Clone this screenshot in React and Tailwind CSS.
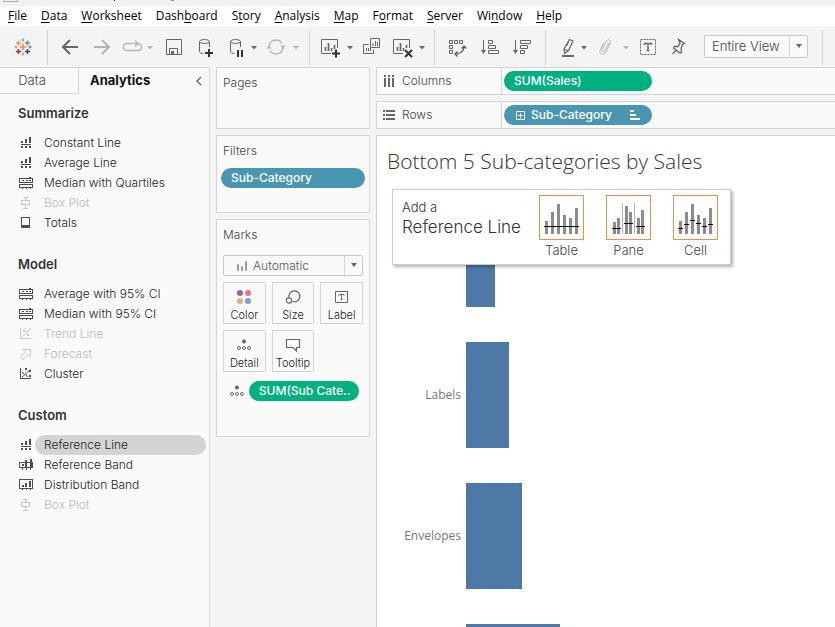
const menuItems = [
  ["", "F", "ile"],
  ["", "D", "ata"],
  ["", "W", "orksheet"],
  ["Dash", "b", "oard"],
  ["S", "t", "ory"],
  ["", "A", "nalysis"],
  ["", "M", "ap"],
  ["F", "o", "rmat"],
  ["", "S", "erver"],
  ["Wi", "n", "dow"],
  ["", "H", "elp"],
];

const sections = [
  {
    title: "Summarize",
    items: [
      { label: "Constant Line", icon: "line" },
      { label: "Average Line", icon: "line" },
      { label: "Median with Quartiles", icon: "quartiles" },
      { label: "Box Plot", icon: "box", disabled: true },
      { label: "Totals", icon: "totals" },
    ],
  },
  {
    title: "Model",
    items: [
      { label: "Average with 95% CI", icon: "quartiles" },
      { label: "Median with 95% CI", icon: "quartiles" },
      { label: "Trend Line", icon: "trend", disabled: true },
      { label: "Forecast", icon: "forecast", disabled: true },
      { label: "Cluster", icon: "cluster" },
    ],
  },
  {
    title: "Custom",
    items: [
      { label: "Reference Line", icon: "line", active: true },
      { label: "Reference Band", icon: "band" },
      { label: "Distribution Band", icon: "distribution" },
      { label: "Box Plot", icon: "box", disabled: true },
    ],
  },
];

const bars = [
  { label: "", width: 29 },
  { label: "Labels", width: 43 },
  { label: "Envelopes", width: 56 },
  { label: "", width: 94 },
];

/* Toolbar drawings, all on a 24x24 grid */
const toolIcons = {
  back: <path d="M5 12h15M12 5l-7 7 7 7" strokeWidth="2" />,
  forward: <path d="M4 12h15M12 5l7 7-7 7" strokeWidth="2" />,
  redo: <path d="M10 8.5H5a3.5 3.5 0 0 0 0 7h11a3.5 3.5 0 0 0 0-7h-5M13 5.5l3 3-3 3" strokeWidth="1.4" />,
  save: (
    <>
      <path d="M4.5 4.5h15v15h-15zM7.5 19.5v-6h8v6" />
      <path d="M9 16h3v3H9z" fill="currentColor" stroke="none" />
    </>
  ),
  dbAdd: (
    <>
      <ellipse cx="12.5" cy="6.5" rx="5" ry="2" />
      <path d="M7.5 6.5v10c0 1.2 1.8 2 4 2M17.5 6.5V12" />
      <path d="M13 18h8M17 14v8" stroke="#333" strokeWidth="2" />
    </>
  ),
  dbPause: (
    <>
      <ellipse cx="13.5" cy="6.5" rx="5" ry="2" />
      <path d="M8.5 6.5v10c0 1.2 1.8 2 4 2M18.5 6.5V12" />
      <path d="M16 15v7M20 15v7" stroke="#333" strokeWidth="2" />
    </>
  ),
  refresh: (
    <>
      <path d="M5 12a7 7 0 0 1 13-3.5M19 12a7 7 0 0 1-13 3.5" strokeWidth="1.4" />
      <path d="M2.5 13.5h5L5 10.5zM16.5 10.5h5L19 13.5z" fill="currentColor" stroke="none" />
    </>
  ),
  sheetAdd: (
    <>
      <path d="M19.5 13V4.5h-16v14H13" />
      <path d="M7.5 16v-4M10.5 16v-8M13.5 16v-3M16.5 14v-4" strokeWidth="1.6" />
      <path d="M14 18.5h8M18 14.5v8" stroke="#333" strokeWidth="2" />
    </>
  ),
  duplicate: (
    <>
      <path d="M10.5 3.5h9v9h-9zM8.5 9.5h-5v9h10v-4" />
      <path d="M13 11V8M15.5 11V6M17.5 11V7M6.5 16v-3M8.5 16v-3M10.5 16v-3" />
    </>
  ),
  sheetClear: (
    <>
      <path d="M19.5 13V4.5h-16v14H13" />
      <path d="M7.5 16v-4M10.5 16v-8M13.5 16v-3M16.5 13v-3" strokeWidth="1.6" />
      <path d="M15 15l7 7M22 15l-7 7" stroke="#333" strokeWidth="2" />
    </>
  ),
  swap: (
    <>
      <path d="M4.5 5.5h3v3h-3zM9.5 5.5h3v3h-3zM14.5 5.5h3v3h-3zM4.5 10.5h3v3h-3zM4.5 15.5h3v3h-3z" />
      <path d="M10 19c5 0 9-3 9-7M16.5 13.5L19 11l2.5 2.5M12.5 16.5L10 19l2.5 2.5" strokeWidth="1.4" />
    </>
  ),
  sortAsc: (
    <>
      <path d="M11.5 5.5h4v3h-4zM11.5 10.5h7v3h-7zM11.5 15.5h10v3h-10z" />
      <path d="M6.5 5v12" />
      <path d="M4 15h5l-2.5 4z" fill="currentColor" stroke="none" />
    </>
  ),
  sortDesc: (
    <>
      <path d="M11.5 5.5h10v3h-10zM11.5 10.5h7v3h-7zM11.5 15.5h4v3h-4z" />
      <path d="M6.5 5v12" />
      <path d="M4 15h5l-2.5 4z" fill="currentColor" stroke="none" />
    </>
  ),
  pen: (
    <>
      <path d="M13.5 4.5l3.5 1.5-4.5 9.5-4 3-.5-4.5zM8 14l4.5 2M10.5 11l2.5-5.5" strokeWidth="1.2" />
      <path d="M6 21h12" strokeWidth="2" />
    </>
  ),
  clip: <path d="M15 8l-4.5 8c-1 1.5-3 .5-2.500-1l4.500-9c1.500-2.500 5-1 4 1.500l-5 10c-2 3-6.500 1.500-5.500-2l4-8" />,
  text: (
    <>
      <path d="M4.5 4.5h15v15h-15z" strokeDasharray="2 1" />
      <path d="M8.5 10V8.500h7V10M12 8.500v7M10.500 15.500h3" strokeWidth="1.400" />
    </>
  ),
  pin: <path d="M12.500 4.500l6 4-2 1-1.500 4 .5 4-1.500.5-6.500-5 1-1.500h3.500l2-3.500zM10 15.500L6.500 19" strokeWidth="1.300" />,
};

function Tool({ icon, label, muted, caret, tight }) {
  return (
    <div className={muted ? "flex text-[#b4b4b4]" : "flex text-[#666]"}>
      <button type="button" aria-label={label} className="size-6">
        <svg viewBox="0 0 24 24" className="size-6" fill="none" stroke="currentColor">
          {toolIcons[icon]}
        </svg>
      </button>
      {caret && (
        <button type="button" aria-label={label + " options"} className={tight ? "h-6 w-2" : "ml-1 h-6 w-2"}>
          <svg viewBox="0 0 8 24" className="h-6 w-2" fill="currentColor">
            <path d="M1 11h6l-3 3.500z" />
          </svg>
        </button>
      )}
    </div>
  );
}

function Divider() {
  return <div className="-mt-[5px] h-[35px] w-px bg-[#d0d0d0]"></div>;
}

function Logo() {
  const crosses = [
    [9, 9, 3.5, "#eb8a44"],
    [4.5, 5, 2.5, "#e8a13c"],
    [13.5, 5, 2.5, "#6b8fa8"],
    [4.5, 13.5, 2.5, "#c72035"],
    [13.5, 13.5, 2.5, "#1f447e"],
    [9, 2, 1.5, "#7199a6"],
    [9, 16, 1.5, "#8f9cc0"],
    [2, 9, 1.5, "#8f9cc0"],
    [16, 9, 1.5, "#5c6692"],
  ];
  return (
    <svg viewBox="0 0 18 18" className="size-[18px]" fill="none">
      {crosses.map(([x, y, r, color]) => (
        <path key={x + "-" + y} d={`M${x - r} ${y}h${r * 2}M${x} ${y - r}v${r * 2}`} stroke={color} strokeWidth={r > 2 ? 1.5 : 1.2} />
      ))}
    </svg>
  );
}

/* Analytics pane drawings, on a 16x14 grid */
const paneIcons = {
  line: <path d="M3 5h2v2H3zM7 3h2v4H7zM11 1h2v6h-2zM3 8h10v1H3zM3 10h2v2H3zM7 10h2v2H7zM11 10h2v2h-2z" />,
  quartiles: (
    <path d="M11 1h2v1h-2zM1 2h14v1H1zM1 3h1v3H1zM14 3h1v3h-1zM4 4h2v1H4zM8 4h2v1H8zM11 4h2v1h-2zM1 6h14v1H1zM1 8h14v1H1zM1 9h1v2H1zM14 9h1v2h-1zM1 11h14v1H1zM4 12h1v1H4zM8 12h1v1H8zM12 12h1v1h-1z" />
  ),
  box: <path d="M5 1h5v1H5zM7 2h1v2H7zM3 4h9v1H3zM3 5h1v4H3zM11 5h1v4h-1zM3 8h9v1H3zM7 9h1v3H7zM5 12h5v1H5z" />,
  totals: <path d="M3 1h9v1H3zM3 2h1v10H3zM11 2h1v10h-1zM3 9h9v3H3z" />,
  trend: (
    <>
      <path d="M2 1h1v10H2zM2 11h11v1H2zM5 3h2v2H5zM9 7h2v2H9zM7 1h1v1H7z" />
      <path d="M4 10L13 1" stroke="currentColor" />
    </>
  ),
  forecast: <path d="M5 2.500h7.500v7.500l-2.500-2.500L5 12.500 2.500 10 7.500 5z" fill="none" stroke="currentColor" />,
  cluster: (
    <>
      <path d="M2 1h1v10H2zM2 11h11v1H2zM7 1h2v2H7zM11 3h2v2h-2zM11 8h2v2h-2z" />
      <path d="M4 10l3-2.500 2-2 3-3M7.500 7l2 3M4 5l2 2" stroke="currentColor" fill="none" />
    </>
  ),
  band: (
    <path d="M12 1h2v3h-2zM7 2h2v2H7zM1 4h14v1H1zM1 5h1v5H1zM14 5h1v5h-1zM1 9h14v1H1zM4 6h2v2H4zM7 5h2v4H7zM12 5h2v4h-2zM4 10h1v2H4zM8 10h1v2H8zM12 10h1v2h-1z" />
  ),
  distribution: (
    <path d="M1 1h14v1H1zM1 2h1v8H1zM14 2h1v8h-1zM1 10h14v1H1zM4 7h2v2H4zM7 5h2v4H7zM11 3h2v6h-2zM4 11h1v1H4zM8 11h1v1H8zM12 11h1v1h-1z" />
  ),
};

function AnalyticsItem({ item }) {
  return (
    <li className={item.disabled ? "flex items-center text-[#b8b8b8]" : "flex items-center text-[#222]"}>
      <svg viewBox="0 0 16 14" className="ml-[18px] h-3.5 w-4 shrink-0 opacity-80" fill="currentColor">
        {paneIcons[item.icon]}
      </svg>
      <button
        type="button"
        disabled={item.disabled}
        className={
          item.active
            ? "ml-px mr-[3px] h-5 flex-1 rounded-full bg-[#d4d4d4] pl-[9px] text-left"
            : "ml-px mr-[3px] h-5 flex-1 rounded-full pl-[9px] text-left"
        }
      >
        {item.label}
      </button>
    </li>
  );
}

function DetailDots() {
  return (
    <svg viewBox="0 0 16 12" className="h-3 w-4 text-[#666]" fill="none" stroke="currentColor">
      <circle cx="8" cy="2.500" r="2" fill="currentColor" stroke="none" />
      <circle cx="3" cy="9" r="1.500" />
      <circle cx="8" cy="9" r="1.500" />
      <circle cx="13" cy="9" r="1.500" />
    </svg>
  );
}

function MarkButton({ label, children }) {
  return (
    <button type="button" className="flex h-[42px] flex-col items-center border border-[#d4d4d4] pt-1 text-[11px] leading-4 text-[#222]">
      <span className="flex h-5 items-center">{children}</span>
      {label}
    </button>
  );
}

function ScopeButton({ label, children }) {
  return (
    <button type="button" className="flex flex-col items-center text-[13px] leading-5 text-[#444]">
      <span className="size-[45px] border border-[#eb9150]">
        <svg viewBox="0 0 43 43" className="size-[43px]">
          {children}
        </svg>
      </span>
      {label}
    </button>
  );
}

function Card({ title, className, children }) {
  return (
    <section className={"border border-[#d4d4d4] bg-[#fafafa] " + className}>
      <h2 className="pl-1.5 pt-[5px] text-[12px] leading-5 text-[#444]">{title}</h2>
      {children}
    </section>
  );
}

export default function App() {
  return (
    <div className="flex h-screen flex-col overflow-hidden bg-[#f4f4f4] font-[Inter,sans-serif] font-light">
      {/* Window title strip */}
      <div className="h-1.5 shrink-0 bg-[#f2f2f2]">
        <svg viewBox="0 0 180 6" className="h-1.5 w-[180px]" fill="none">
          <path d="M3.500 0v1.500h14V0" stroke="#aaa" />
          <path d="M115 0l-1 1M171 0h3" stroke="#333" />
        </svg>
      </div>

      {/* Menu */}
      <nav className="flex h-5 shrink-0 items-center gap-3.5 bg-white pl-2 font-['Open_Sans',sans-serif] text-[12px] font-normal text-black">
        {menuItems.map(([before, key, after]) => (
          <button type="button" key={before + key + after}>
            {before}
            <span className="underline underline-offset-2">{key}</span>
            {after}
          </button>
        ))}
      </nav>

      {/* Toolbar */}
      <div className="flex h-[41px] shrink-0 items-start pt-[9px]">
        <div className="ml-3.5 mr-[15px] mt-[3px]">
          <Logo />
        </div>
        <Divider />
        <div className="ml-2.5 flex gap-2">
          <Tool icon="back" label="Undo" />
          <Tool icon="forward" label="Redo" muted />
          <Tool icon="redo" label="Replay" muted caret tight />
        </div>
        <div className="ml-2 mr-[9px] flex gap-1.5">
          <Tool icon="save" label="Save" />
          <Tool icon="dbAdd" label="New data source" />
          <Tool icon="dbPause" label="Pause updates" caret />
          <Tool icon="refresh" label="Run update" muted caret />
        </div>
        <Divider />
        <div className="mx-2 flex gap-1.5">
          <Tool icon="sheetAdd" label="New worksheet" caret />
          <Tool icon="duplicate" label="Duplicate" />
          <Tool icon="sheetClear" label="Clear sheet" caret />
        </div>
        <Divider />
        <div className="ml-2.5 mr-3 flex gap-2">
          <Tool icon="swap" label="Swap rows and columns" />
          <Tool icon="sortAsc" label="Sort ascending" />
          <Tool icon="sortDesc" label="Sort descending" />
        </div>
        <Divider />
        <div className="ml-2.5 flex gap-1.5">
          <Tool icon="pen" label="Highlight" caret tight />
          <Tool icon="clip" label="Group members" muted caret />
        </div>
        <div className="ml-1.5 mr-3.5 flex gap-1.5">
          <Tool icon="text" label="Show mark labels" />
          <Tool icon="pin" label="Fix axes" />
        </div>
        <div className="relative mr-3.5">
          <select
            aria-label="Fit"
            defaultValue="entire"
            className="block h-[23px] w-[104px] appearance-none rounded-xs border border-[#c8c8c8] bg-[#fafafa] pl-[7px] text-[13px] text-[#444]"
          >
            <option value="entire">Entire View</option>
          </select>
          <span className="pointer-events-none absolute right-px top-px flex h-[21px] w-[18px] items-center justify-center border-l border-[#d4d4d4]">
            <svg viewBox="0 0 8 5" className="h-[5px] w-2 fill-[#666]">
              <path d="M1 0h6L4 4z" />
            </svg>
          </span>
        </div>
        <Divider />
      </div>

      <div className="flex min-h-0 flex-1">
        {/* Analytics pane */}
        <aside className="w-[210px] shrink-0 border-r border-t border-[#d4d4d4] bg-[#fafafa] text-[12px]">
          <div className="flex h-[26px]">
            <button type="button" className="w-[79px] border-b border-r border-[#d4d4d4] pr-3.5 text-[13px] text-[#444]">
              Data
            </button>
            <button type="button" className="pl-[11px] text-[13px] font-bold text-[#111]">
              Analytics
            </button>
            <button type="button" aria-label="Collapse pane" className="ml-auto mr-1.5">
              <svg viewBox="0 0 8 10" className="h-2.5 w-2" fill="none" stroke="#666" strokeWidth="1.400">
                <path d="M6 1L2 5l4 4" />
              </svg>
            </button>
          </div>
          {sections.map((section) => (
            <section key={section.title} className="pb-3 pt-[9px]">
              <h2 className="mb-2.5 pl-[18px] text-[13px] font-semibold leading-5 text-[#333]">{section.title}</h2>
              <ul>
                {section.items.map((item) => (
                  <AnalyticsItem key={item.label} item={item} />
                ))}
              </ul>
            </section>
          ))}
        </aside>

        {/* Cards */}
        <div className="flex w-[166px] shrink-0 flex-col gap-1.5 px-1.5">
          <Card title="Pages" className="h-[62px]" />
          <Card title="Filters" className="h-[78px]">
            <button type="button" className="mx-1 mt-[7px] block h-5 w-36 rounded-full bg-[#4996b2] pl-2.5 text-left text-[12px] font-medium text-white">
              Sub-Category
            </button>
          </Card>
          <Card title="Marks" className="h-[218px]">
            <div className="mx-1.5 mt-2.5">
              <div className="relative flex h-[21px] items-center rounded-xs border border-[#c8c8c8] bg-[#fafafa]">
                <svg viewBox="0 0 12 10" className="ml-3 h-2.5 w-3 shrink-0" fill="none" stroke="#999">
                  <path d="M1.500 3.500h1v6h-1zM5.500 5.500h1v4h-1zM9.500 .5h1v9h-1z" />
                </svg>
                <select aria-label="Mark type" defaultValue="auto" className="h-full flex-1 appearance-none pl-[5px] text-[12px] text-[#555]">
                  <option value="auto">Automatic</option>
                </select>
                <span className="pointer-events-none absolute right-0 top-0 flex h-full w-[18px] items-center justify-center border-l border-[#d4d4d4]">
                  <svg viewBox="0 0 8 5" className="h-[5px] w-2 fill-[#666]">
                    <path d="M1 0h6L4 4z" />
                  </svg>
                </span>
              </div>
              <div className="mt-1.5 grid grid-cols-3 gap-1.5">
                <MarkButton label="Color">
                  <svg viewBox="0 0 16 16" className="size-4">
                    <circle cx="4" cy="4" r="3" fill="#86709c" />
                    <circle cx="12" cy="4" r="3" fill="#ff6f83" />
                    <circle cx="4" cy="12" r="3" fill="#f5a77a" />
                    <circle cx="12" cy="12" r="3" fill="#7f9fce" />
                  </svg>
                </MarkButton>
                <MarkButton label="Size">
                  <svg viewBox="0 0 16 16" className="size-4" fill="none" stroke="#666" strokeWidth="1.200">
                    <path d="M4 8.500a5.500 5.500 0 1 1 3.500 4" />
                    <circle cx="4" cy="11.500" r="2.700" />
                  </svg>
                </MarkButton>
                <MarkButton label="Label">
                  <svg viewBox="0 0 16 16" className="size-4" fill="none" stroke="#666">
                    <path d="M1.500 2.500h12v11h-12z" />
                    <path d="M5 6.500v-1h5v1M7.500 5.500v5M6.500 10.500h2" />
                  </svg>
                </MarkButton>
                <MarkButton label="Detail">
                  <DetailDots />
                </MarkButton>
                <MarkButton label="Tooltip">
                  <svg viewBox="0 0 16 16" className="size-4" fill="none" stroke="#666" strokeWidth="1.200">
                    <path d="M1.500 2.500h13v8h-3v3.500l-3.500-3.500H1.500z" />
                  </svg>
                </MarkButton>
              </div>
              <div className="mt-[9px] flex items-center gap-1 pl-1.5 pr-1">
                <DetailDots />
                <button type="button" className="ml-auto h-5 w-[111px] rounded-full bg-[#00b180] pl-2.5 text-left text-[12px] font-medium text-white">
                  SUM(Sub Cate..
                </button>
              </div>
            </div>
          </Card>
        </div>

        <main className="flex min-w-0 flex-1 flex-col gap-1.5">
          {/* Shelves */}
          <div className="flex h-7 shrink-0 border-y border-l border-[#d4d4d4] bg-[#fafafa]">
            <div className="flex w-[125px] shrink-0 items-center gap-[5px] border-r border-[#d4d4d4] pl-1.5 text-[12px] text-[#444]">
              <svg viewBox="0 0 14 14" className="size-3.5 fill-[#666]">
                <path d="M1 1h2v2H1zM5 1h2v2H5zM9 1h2v2H9zM1 4h2v9H1zM5 4h2v9H5zM9 4h2v9H9z" />
              </svg>
              Columns
            </div>
            <button type="button" className="ml-0.5 mt-[3px] h-5 w-[148px] rounded-full bg-[#00b180] pl-2.5 text-left text-[12px] font-medium text-white">
              SUM(Sales)
            </button>
          </div>
          <div className="flex h-7 shrink-0 border-y border-l border-[#d4d4d4] bg-[#fafafa]">
            <div className="flex w-[125px] shrink-0 items-center gap-[5px] border-r border-[#d4d4d4] pl-1.5 text-[12px] text-[#444]">
              <svg viewBox="0 0 14 14" className="size-3.5 fill-[#666]">
                <path d="M0 2h2v2H0zM0 6h2v2H0zM0 10h2v2H0zM3 2h9v2H3zM3 6h9v2H3zM3 10h9v2H3z" />
              </svg>
              Rows
            </div>
            <button type="button" className="ml-0.5 mt-[3px] flex h-5 w-[148px] items-center rounded-full bg-[#4996b2] pl-3 pr-2.5 text-[12px] font-medium text-white">
              <svg viewBox="0 0 9 9" className="mr-1.5 size-[9px]" fill="none" stroke="#fff">
                <path d="M.5.5h8v8h-8zM2 4.500h5M4.500 2v5" />
              </svg>
              Sub-Category
              <svg viewBox="0 0 12 10" className="ml-auto h-2.5 w-3 fill-white">
                <path d="M0 0h4v2H0zM0 4h6v2H0zM0 8h10v2H0z" />
              </svg>
            </button>
          </div>

          {/* View */}
          <div className="relative min-h-0 flex-1 overflow-hidden border-l border-t border-[#d4d4d4] bg-white">
            <h1 className="pl-2.5 pt-[13px] font-['Open_Sans',sans-serif] text-[21px] leading-6 text-[#333]">
              Bottom 5 Sub-categories by Sales
            </h1>
            <div className="mt-7 flex flex-col gap-[35px]">
              {bars.map((bar) => (
                <div key={bar.width} className="flex h-[106px] shrink-0 items-center gap-[5px]">
                  <span className="w-21 text-right font-['Open_Sans',sans-serif] text-[12px] font-normal text-[#777]">{bar.label}</span>
                  <div className="h-full bg-[#4e79a7]" style={{ width: bar.width }}></div>
                </div>
              ))}
            </div>

            {/* Reference line drop target */}
            <div className="absolute left-[15px] top-[53px] flex h-[76px] w-[339px] justify-between border border-[#ccc] bg-white pl-[9px] pr-3 pt-[5px] shadow-[2px_2px_3px_rgba(0,0,0,0.3)]">
              <div className="pt-0.5 text-[#333]">
                <div className="text-[13px] leading-5">Add a</div>
                <div className="text-[17px] leading-5">Reference Line</div>
              </div>
              <div className="flex items-start gap-[22px]">
                <ScopeButton label="Table">
                  <path
                    d="M5 25h3v13H5zM11 16h3v22h-3zM17 8h3v30h-3zM23 19h3v19h-3zM29 22h3v16h-3zM35 12h3v26h-3z"
                    fill="#8c8c8c"
                  />
                  <path d="M4 30.500h35" stroke="#000" />
                </ScopeButton>
                <ScopeButton label="Pane">
                  <path
                    d="M6 26h3v12H6zM10 22h3v16h-3zM18 10h3v28h-3zM22 16h3v22h-3zM30 22h3v16h-3zM34 14h3v24h-3z"
                    fill="#8c8c8c"
                  />
                  <path d="M15.500 7v31M27.500 7v31" stroke="#b4b4b4" />
                  <path d="M5 32.500h9M17 27.500h9M29 30.500h9" stroke="#000" />
                </ScopeButton>
                <ScopeButton label="Cell">
                  <path
                    d="M5 25h3v13H5zM11 16h3v22h-3zM17 8h3v30h-3zM23 19h3v19h-3zM29 22h3v16h-3zM35 12h3v26h-3z"
                    fill="#8c8c8c"
                  />
                  <path d="M4 32.500h5M10 28.500h5M16 24.500h5M22 27.500h5M28 30.500h5M34 28.500h5" stroke="#000" />
                </ScopeButton>
              </div>
            </div>
          </div>
        </main>
      </div>
    </div>
  );
}
